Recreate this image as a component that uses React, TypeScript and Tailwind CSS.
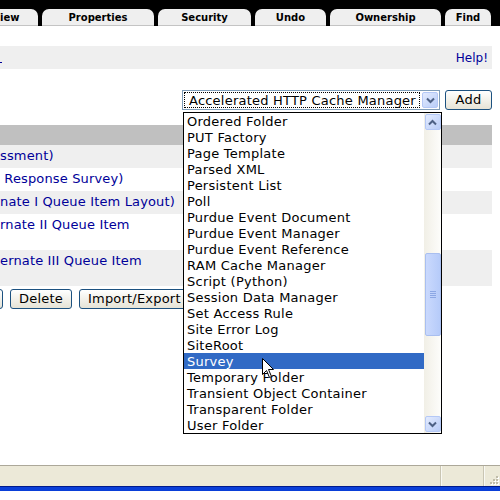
import React from 'react';

const tabs = [
  { label: 'iew', w: 38, left: true },
  { label: 'Properties', w: 112 },
  { label: 'Security', w: 93 },
  { label: 'Undo', w: 71 },
  { label: 'Ownership', w: 111 },
  { label: 'Find', w: 46 },
];

const rows = [
  { text: 'ssment)', h: 23, gray: true },
  { text: '\u00a0Response Survey)', h: 23, gray: false },
  { text: 'nate I Queue Item Layout)', h: 23, gray: true },
  { text: 'rnate II Queue Item', h: 36, gray: false },
  { text: 'ernate III Queue Item', h: 36, gray: true },
];

const options = [
  'Ordered Folder',
  'PUT Factory',
  'Page Template',
  'Parsed XML',
  'Persistent List',
  'Poll',
  'Purdue Event Document',
  'Purdue Event Manager',
  'Purdue Event Reference',
  'RAM Cache Manager',
  'Script (Python)',
  'Session Data Manager',
  'Set Access Rule',
  'Site Error Log',
  'SiteRoot',
  'Survey',
  'Temporary Folder',
  'Transient Object Container',
  'Transparent Folder',
  'User Folder',
];

const Chevron = ({ up }: { up?: boolean }) => (
  <svg width="9" height="7" viewBox="0 0 9 7">
    <path
      d={up ? 'M1 5.5 L4.5 2 L8 5.5' : 'M1 1.5 L4.5 5 L8 1.5'}
      fill="none"
      stroke="#4d6185"
      strokeWidth="2"
    />
  </svg>
);

const XpArrowButton = ({ up }: { up?: boolean }) => (
  <div className="w-[16px] h-[16px] rounded-[2px] border border-[#b4c8f6] bg-gradient-to-br from-[#e3ebfe] to-[#b9cdf8] flex items-center justify-center">
    <Chevron up={up} />
  </div>
);

const XpButton = ({ children, className = '' }: { children: React.ReactNode; className?: string }) => (
  <div
    className={`h-[20px] rounded-[3px] border border-[#1c5180] bg-gradient-to-b from-white to-[#e6e3d6] flex items-center justify-center text-[13px] text-black ${className}`}
  >
    {children}
  </div>
);

const App: React.FC = () => {
  return (
    <div
      className="relative w-[500px] h-[500px] overflow-hidden bg-white flex flex-col"
      style={{ fontFamily: '"DejaVu Sans", Verdana, sans-serif' }}
    >
      {/* Tab bar */}
      <div className="h-[26px] bg-black flex items-end gap-[4px] shrink-0">
        {tabs.map((t) => (
          <div
            key={t.label}
            style={{ width: t.w }}
            className={`h-[17px] bg-[#efefef] border-b border-[#c4c4c4] flex items-center text-[10px] font-bold text-black ${
              t.left ? 'rounded-tr-[7px] justify-start' : 'rounded-t-[7px] justify-center'
            }`}
          >
            {t.label}
          </div>
        ))}
      </div>

      <div className="flex-1 flex flex-col">
        {/* Help bar */}
        <div className="mt-[20px] w-[492px] h-[23px] bg-[#efefef] flex items-center justify-between text-[12px]">
          <span className="block w-[2px] h-[1px] mt-[10px] bg-[#000099]" />
          <span className="text-[#000099] pr-[4px]">Help!</span>
        </div>

        {/* Add row */}
        <div className="mt-[21px] h-[20px] flex justify-end items-center gap-[5px] pr-[8px]">
          <div className="w-[258px] h-[20px] border border-[#7f9db9] bg-white flex items-center p-[1px] gap-[2px]">
            <div className="flex-1 h-[16px] border border-dotted border-black flex items-center pl-[4px] text-[13px] tracking-[0.22px] text-black leading-none whitespace-nowrap">
              Accelerated HTTP Cache Manager
            </div>
            <XpArrowButton />
          </div>
          <XpButton className="w-[47px] tracking-[0.3px]">Add</XpButton>
        </div>

        {/* Table */}
        <div className="mt-[15px] w-[492px] flex flex-col text-[13px] tracking-[0.15px] text-[#000099]">
          <div className="h-[20px] bg-[#c0c0c0]" />
          {rows.map((r, i) => (
            <div
              key={i}
              style={{ height: r.h }}
              className={`${r.gray ? 'bg-[#efefef]' : 'bg-white'} pt-[3px] leading-[16px] whitespace-nowrap`}
            >
              {r.text}
            </div>
          ))}
        </div>

        {/* Buttons */}
        <div className="mt-[3px] flex items-center gap-[7px] ml-[-5px] tracking-[0.2px]">
          <XpButton className="w-[8px]">{''}</XpButton>
          <XpButton className="w-[62px]">Delete</XpButton>
          <XpButton className="w-[120px] justify-start pl-[8px]">Import/Export</XpButton>
        </div>
      </div>

      {/* Status bar */}
      <div className="h-[21px] shrink-0 bg-[#ece9d8] border-t border-[#aca899] flex">
        <div className="flex-1" />
        <div className="w-[2px] h-full border-l border-[#c9c5b3] bg-white/70" />
        <div className="w-[41px]" />
        <div className="w-[2px] h-full border-l border-[#c9c5b3] bg-white/70" />
        <div className="w-[15px] flex items-end justify-end pb-[1px] pr-[1px]">
          <svg width="11" height="11" viewBox="0 0 11 11">
            {[
              [8, 2],
              [5, 5],
              [8, 5],
              [2, 8],
              [5, 8],
              [8, 8],
            ].map(([x, y], i) => (
              <g key={i}>
                <rect x={x + 1} y={y + 1} width="2" height="2" fill="#fff" />
                <rect x={x} y={y} width="2" height="2" fill="#c0bca9" />
              </g>
            ))}
          </svg>
        </div>
      </div>
      <div className="h-[5px] shrink-0 bg-[#0a3fd8] border-t border-[#001a8c]" />
      <div className="h-[9px] shrink-0 bg-white" />

      {/* Open dropdown list */}
      <div className="absolute left-[183px] top-[112px] w-[259px] h-[322px] border border-black bg-white flex">
        <div className="flex-1 flex flex-col text-[13px] tracking-[0.25px] text-black leading-[16px]">
          {options.map((o) => (
            <div
              key={o}
              className={`h-[16px] pl-[3px] pt-[1px] whitespace-nowrap overflow-hidden ${
                o === 'Survey' ? 'bg-[#316ac5] text-white' : ''
              }`}
            >
              {o}
            </div>
          ))}
        </div>
        <div className="w-[17px] h-full bg-gradient-to-r from-[#f1efe6] to-[#fdfdfb] flex flex-col items-center py-[1px]">
          <XpArrowButton up />
          <div className="flex-1 w-full flex flex-col items-center">
            <div className="h-[123px]" />
            <div className="w-[16px] h-[83px] rounded-[2px] border border-[#a9bff0] bg-gradient-to-r from-[#cad9fd] to-[#b6cbf9] flex flex-col items-center justify-center gap-[1px]">
              {[0, 1, 2, 3].map((i) => (
                <div key={i} className="w-[6px] h-[1px] bg-[#8ca7e4]" />
              ))}
            </div>
          </div>
          <XpArrowButton />
        </div>
      </div>

      {/* Mouse cursor */}
      <svg className="absolute left-[262px] top-[358px]" width="13" height="21" viewBox="0 0 13 21">
        <path
          d="M0.5 0.5 L0.5 16.5 L4.5 12.5 L7.5 19.5 L9.5 18.5 L6.5 11.5 L11.5 11.5 Z"
          fill="#fff"
          stroke="#000"
          strokeWidth="1"
        />
      </svg>
    </div>
  );
};

export default App;
